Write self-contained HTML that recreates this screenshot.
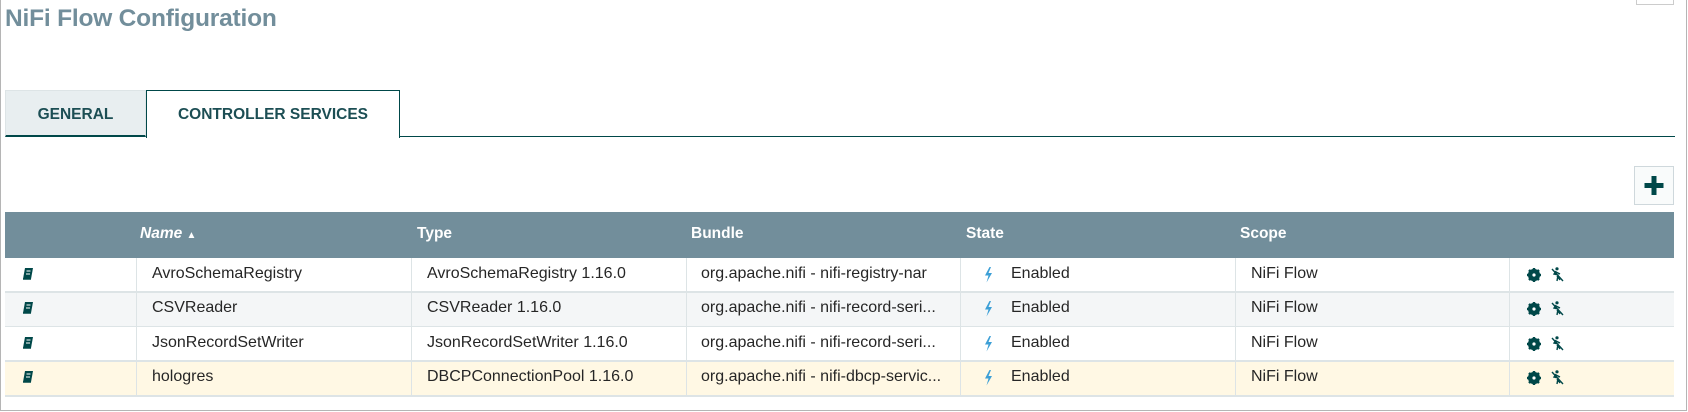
<!DOCTYPE html>
<html><head><meta charset="utf-8"><style>
*{box-sizing:border-box;margin:0;padding:0}
body{width:1688px;height:412px;background:#fff;font-family:"Liberation Sans",sans-serif;position:relative;overflow:hidden}
.frame{position:absolute;left:0;top:0;width:1687px;height:411px;border:1px solid #b5b5b5;border-top:none}
.topbox{position:absolute;left:1636px;top:-1px;width:38px;height:6px;border:1px solid #ccc;border-top:none}
h1{position:absolute;left:5px;top:5px;font-size:24.5px;font-weight:bold;color:#728e9b;letter-spacing:-0.2px}
.tab{position:absolute;top:90px;height:47px;font-size:15.5px;font-weight:bold;color:#1c4e54;text-align:center;line-height:48px}
.t1{left:5px;width:141px;background:#e8eef0;border:1px solid #dde4e6;border-bottom:2px solid #004849}
.t2{left:146px;width:254px;background:#fff;border:1px solid #004849;border-bottom:none;height:48px}
.line{position:absolute;left:399px;top:136px;width:1276px;height:1px;background:#004849}
.plus{position:absolute;left:1634px;top:166px;width:40px;height:39px;border:1px solid #cfd8dc;background:#f9fbfb}
.hdr{position:absolute;left:5px;top:212px;width:1669px;height:46px;background:#728e9b}
.hl{position:absolute;top:225px;font-size:15.5px;font-weight:bold;color:#fff}
.row{position:absolute;left:5px;width:1669px;height:35px;border-bottom:2px solid #dde4e6}
.c{position:absolute;font-size:16px;color:#262626}
.sep{position:absolute;width:1px;top:258px;height:138px;background:#dde4e6}
</style></head><body>
<div class="frame"></div><div class="topbox"></div>
<h1>NiFi Flow Configuration</h1>
<div class="tab t1">GENERAL</div>
<div class="tab t2">CONTROLLER SERVICES</div>
<div class="line"></div>
<div class="plus"><svg width="38" height="37" viewBox="0 0 38 37"><path d="M19 9v19M9.5 18.5h19" stroke="#004849" stroke-width="5"/></svg></div>
<div class="hdr"></div>
<div class="hl" style="left:140px;font-style:italic">Name <span style="font-size:10px">▲</span></div>
<div class="hl" style="left:417px">Type</div>
<div class="hl" style="left:691px">Bundle</div>
<div class="hl" style="left:966px">State</div>
<div class="hl" style="left:1240px">Scope</div>

<div class="row" style="top:258px;background:#fff"></div>
<div class="row" style="top:293px;background:#f4f6f7"></div>
<div class="row" style="top:327px;background:#fff"></div>
<div class="row" style="top:362px;background:#fff8e4"></div>
<div class="sep" style="left:136px"></div>
<div class="sep" style="left:411px"></div>
<div class="sep" style="left:686px"></div>
<div class="sep" style="left:960px"></div>
<div class="sep" style="left:1235px"></div>
<div class="sep" style="left:1509px"></div>

<div class="c" style="left:22px;top:267px"><svg width="12" height="14" viewBox="0 0 12 14"><path d="M3 1h8l-2 11H1z" fill="#004849"/><path d="M1 12h8" stroke="#004849" stroke-width="1.5"/><path d="M4.5 4h4M4 7h4" stroke="#fff" stroke-width="1"/></svg></div>
<div class="c" style="left:22px;top:301px"><svg width="12" height="14" viewBox="0 0 12 14"><path d="M3 1h8l-2 11H1z" fill="#004849"/><path d="M1 12h8" stroke="#004849" stroke-width="1.5"/><path d="M4.5 4h4M4 7h4" stroke="#fff" stroke-width="1"/></svg></div>
<div class="c" style="left:22px;top:336px"><svg width="12" height="14" viewBox="0 0 12 14"><path d="M3 1h8l-2 11H1z" fill="#004849"/><path d="M1 12h8" stroke="#004849" stroke-width="1.5"/><path d="M4.5 4h4M4 7h4" stroke="#fff" stroke-width="1"/></svg></div>
<div class="c" style="left:22px;top:370px"><svg width="12" height="14" viewBox="0 0 12 14"><path d="M3 1h8l-2 11H1z" fill="#004849"/><path d="M1 12h8" stroke="#004849" stroke-width="1.5"/><path d="M4.5 4h4M4 7h4" stroke="#fff" stroke-width="1"/></svg></div>

<div class="c" style="left:152px;top:265px">AvroSchemaRegistry</div>
<div class="c" style="left:427px;top:265px">AvroSchemaRegistry 1.16.0</div>
<div class="c" style="left:701px;top:265px">org.apache.nifi - nifi-registry-nar</div>
<div class="c" style="left:1011px;top:265px">Enabled</div>
<div class="c" style="left:1251px;top:265px">NiFi Flow</div>

<div class="c" style="left:152px;top:299px">CSVReader</div>
<div class="c" style="left:427px;top:299px">CSVReader 1.16.0</div>
<div class="c" style="left:701px;top:299px">org.apache.nifi - nifi-record-seri...</div>
<div class="c" style="left:1011px;top:299px">Enabled</div>
<div class="c" style="left:1251px;top:299px">NiFi Flow</div>

<div class="c" style="left:152px;top:334px">JsonRecordSetWriter</div>
<div class="c" style="left:427px;top:334px">JsonRecordSetWriter 1.16.0</div>
<div class="c" style="left:701px;top:334px">org.apache.nifi - nifi-record-seri...</div>
<div class="c" style="left:1011px;top:334px">Enabled</div>
<div class="c" style="left:1251px;top:334px">NiFi Flow</div>

<div class="c" style="left:152px;top:368px">hologres</div>
<div class="c" style="left:427px;top:368px">DBCPConnectionPool 1.16.0</div>
<div class="c" style="left:701px;top:368px">org.apache.nifi - nifi-dbcp-servic...</div>
<div class="c" style="left:1011px;top:368px">Enabled</div>
<div class="c" style="left:1251px;top:368px">NiFi Flow</div>

<svg style="position:absolute;left:0;top:0" width="1688" height="412">
<defs>
<g id="b"><path d="M4.5 0L0 8.5h3.5l-2 7 5.5-9.5H3.5l2.5-6z" fill="#3c9fd6"/></g>
<g id="g"><circle cx="7" cy="7" r="4.5" fill="none" stroke="#004849" stroke-width="3.2"/><path d="M7 0v14M0 7h14M2 2l10 10M12 2L2 12" stroke="#004849" stroke-width="2.4"/><circle cx="7" cy="7" r="1.6" fill="#fff"/></g>
<g id="x"><circle cx="6" cy="1.8" r="1.6" fill="#004849"/><path d="M5 4l-2 3 4 1-1 6M5 5l4 2M6 9l3 4M1 2l11 12" stroke="#004849" stroke-width="1.4" fill="none"/></g>
</defs>
<use href="#b" x="985" y="267"/><use href="#b" x="985" y="301"/><use href="#b" x="985" y="336"/><use href="#b" x="985" y="370"/>
<use href="#g" x="1527" y="268"/><use href="#g" x="1527" y="302"/><use href="#g" x="1527" y="337"/><use href="#g" x="1527" y="371"/>
<use href="#x" x="1551" y="267"/><use href="#x" x="1551" y="301"/><use href="#x" x="1551" y="336"/><use href="#x" x="1551" y="370"/>
</svg>
</body></html>
